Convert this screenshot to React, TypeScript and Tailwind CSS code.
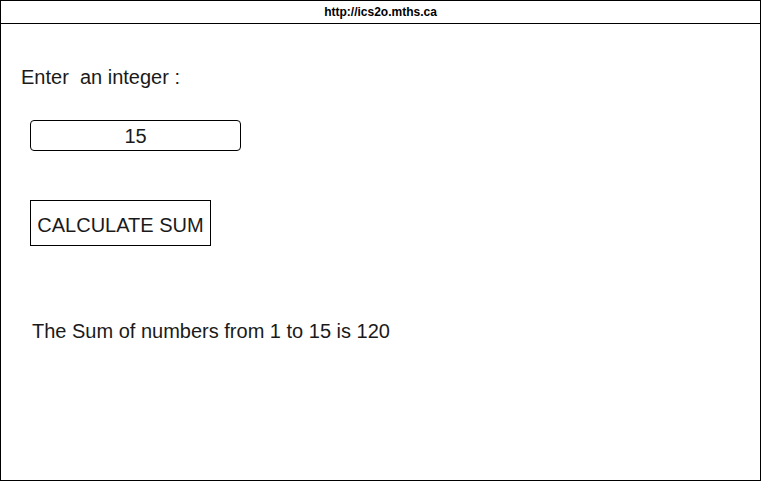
export default function App() {
  return (
    <div
      className="w-[761px] h-[481px] border border-black bg-white flex flex-col text-[#1a1a1a]"
      style={{ fontFamily: '"Liberation Sans", Arial, sans-serif' }}
    >
      <div className="h-[23px] shrink-0 border-b border-black flex items-center justify-center text-[12px] font-bold text-black">
        http://ics2o.mths.ca
      </div>
      <div className="flex flex-col items-start pl-[20px]">
        <div className="mt-[41px] text-[20px] leading-[24px] whitespace-pre">Enter  an integer :</div>
        <div className="mt-[31px] ml-[9px] w-[211px] h-[31px] border border-black rounded-[4px] flex items-center justify-center text-[20px]">
          15
        </div>
        <div className="mt-[49px] ml-[9px] w-[181px] h-[46px] pt-[4px] border border-black flex items-center justify-center text-[20px]">
          CALCULATE SUM
        </div>
        <div className="mt-[73px] ml-[11px] text-[20px] leading-[24px]">
          The Sum of numbers from 1 to 15 is 120
        </div>
      </div>
    </div>
  );
}
